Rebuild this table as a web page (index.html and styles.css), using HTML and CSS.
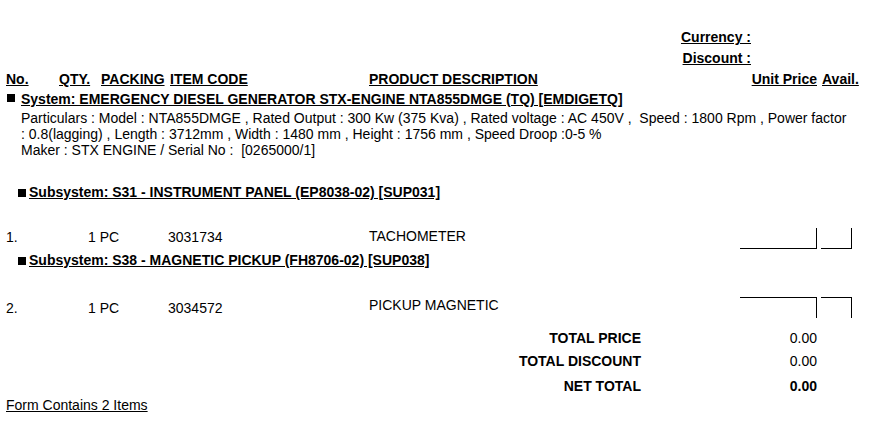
FILE: index.html
```html
<!DOCTYPE html>
<html>
<head>
<meta charset="utf-8">
<link rel="stylesheet" href="styles.css">
</head>
<body>
<div class="page">
  <div class="meta">
    <div class="meta-row first"><span class="b u">Currency :</span></div>
    <div class="meta-row second"><span class="b u">Discount :</span></div>
  </div>

  <div class="hdr">
    <span class="b u">No.</span>
    <span class="b u">QTY.</span>
    <span class="b u">PACKING</span>
    <span class="b u">ITEM CODE</span>
    <span class="b u">PRODUCT DESCRIPTION</span>
    <span class="b u right">Unit Price</span>
    <span class="b u avail">Avail.</span>
  </div>

  <div class="system">
    <span class="sq sq-sys"></span><span class="b u">System: EMERGENCY DIESEL GENERATOR STX-ENGINE NTA855DMGE (TQ) [EMDIGETQ]</span>
  </div>
  <div class="particulars">Particulars : Model : NTA855DMGE , Rated Output : 300 Kw (375 Kva) , Rated voltage : AC 450V ,&nbsp; Speed : 1800 Rpm , Power factor<br>: 0.8(lagging) , Length : 3712mm , Width : 1480 mm , Height : 1756 mm , Speed Droop :0-5 %<br>Maker : STX ENGINE / Serial No :&nbsp; [0265000/1]</div>

  <div class="subsystem sub1">
    <span class="sq sq-sub"></span><span class="b u">Subsystem: S31 - INSTRUMENT PANEL (EP8038-02) [SUP031]</span>
  </div>

  <div class="item item1">
    <span class="cell">1.</span>
    <span class="cell">1 PC</span>
    <span class="cell">3031734</span>
    <span class="cell desc">TACHOMETER</span>
    <span class="box box-price"></span>
    <span class="box box-avail"></span>
  </div>

  <div class="subsystem sub2">
    <span class="sq sq-sub"></span><span class="b u">Subsystem: S38 - MAGNETIC PICKUP (FH8706-02) [SUP038]</span>
  </div>

  <div class="item item2">
    <span class="cell">2.</span>
    <span class="cell">1 PC</span>
    <span class="cell">3034572</span>
    <span class="cell desc">PICKUP MAGNETIC</span>
    <span class="box box-price"></span>
    <span class="box box-avail"></span>
  </div>

  <div class="totals">
    <div class="trow tr1"><span class="b tl">TOTAL PRICE</span><span class="tv">0.00</span></div>
    <div class="trow tr2"><span class="b tl">TOTAL DISCOUNT</span><span class="tv">0.00</span></div>
    <div class="trow tr3"><span class="b tl">NET TOTAL</span><span class="b tv">0.00</span></div>
  </div>

  <div class="footer"><span class="u">Form Contains 2 Items</span></div>
</div>
</body>
</html>
```

FILE: styles.css
```css
html, body {
  margin: 0;
  padding: 0;
  background: #fff;
}
body {
  font-family: "Liberation Sans", Arial, Helvetica, sans-serif;
  font-size: 14px;
  line-height: 16px;
  color: #000;
}
.page {
  width: 872px;
  padding-top: 29px;
}
.b { font-weight: bold; }
.u { text-decoration: underline; }

.meta {
  width: 751px;
  text-align: right;
}
.meta-row.second { margin-top: 5px; }

.hdr {
  margin-top: 5px;
  display: grid;
  grid-template-columns: 53px 42px 69px 199px 371px 77px 4px 31px;
  padding-left: 6px;
  white-space: nowrap;
}
.hdr .right { text-align: right; }
.hdr .avail { grid-column: 8; margin-left: 1px; }

.system {
  margin-top: 4px;
  padding-left: 7px;
  display: flex;
  align-items: flex-start;
  white-space: nowrap;
}
.sq {
  display: inline-block;
  width: 8px;
  height: 8px;
  background: #000;
  flex: none;
}
.sq-sys { margin-top: 3px; margin-right: 6px; }

.particulars {
  margin-top: 3px;
  padding-left: 21px;
  white-space: nowrap;
}

.subsystem {
  padding-left: 18px;
  display: flex;
  align-items: flex-start;
  white-space: nowrap;
}
.sq-sub { margin-top: 5px; margin-right: 3px; }
.sub1 { margin-top: 26px; }
.sub2 { margin-top: 3px; }

.item {
  display: grid;
  grid-template-columns: 82px 80px 201px 371px 77px 4px 31px;
  padding-left: 6px;
  height: 21px;
  white-space: nowrap;
}
.item .box { box-sizing: border-box; height: 21px; border-right: 1px solid #000; }
.item .box-avail { grid-column: 7; }
.item1 { margin-top: 28px; }
.item1 .cell { padding-top: 1px; }
.item1 .desc { padding-top: 0; }
.item1 .box { border-bottom: 1px solid #000; }
.item2 { margin-top: 29px; }
.item2 .cell { padding-top: 3px; }
.item2 .desc { padding-top: 0; }
.item2 .box { border-top: 1px solid #000; }

.totals {
  margin-top: 12px;
}
.trow {
  display: grid;
  grid-template-columns: 641px 176px;
  white-space: nowrap;
}
.tl, .tv { text-align: right; }
.tr2 { margin-top: 7px; }
.tr3 { margin-top: 9px; }

.footer {
  margin-top: 3px;
  padding-left: 6px;
}
```
